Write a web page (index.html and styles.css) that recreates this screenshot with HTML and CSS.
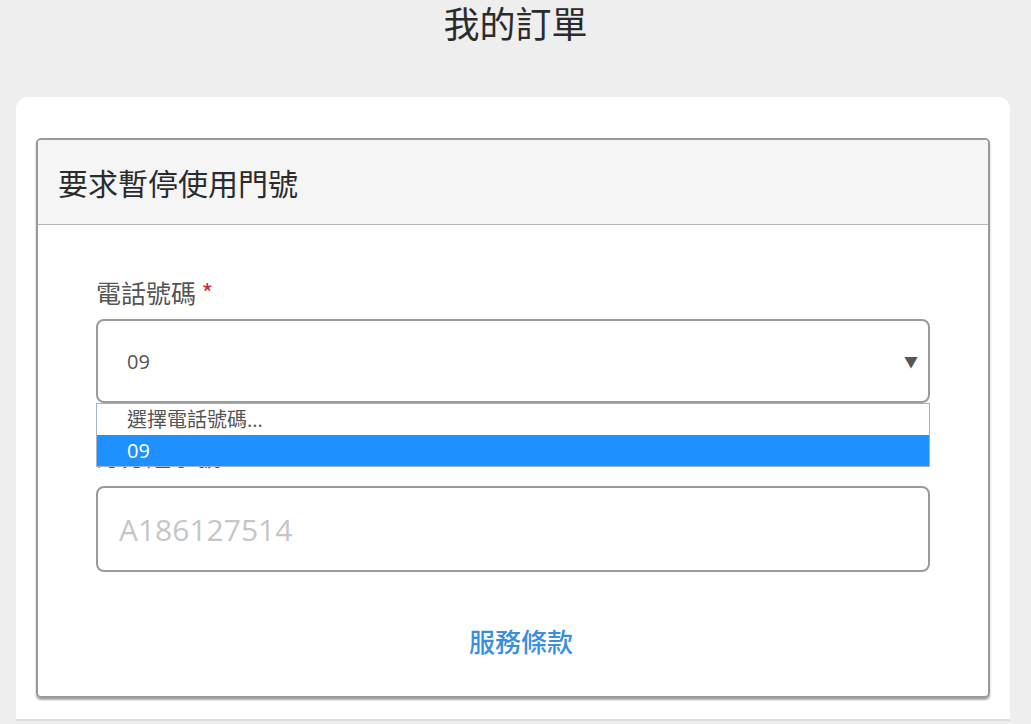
FILE: index.html
```html
<!DOCTYPE html>
<html lang="zh-Hant">
<head>
    <meta charset="UTF-8">
    <title>我的訂單</title>
    <link rel="stylesheet" href="styles.css">
</head>
<body>
<h1 class="pageTitle">我的訂單</h1>
<div class="card">
    <div class="panel">
        <div class="panelHead">要求暫停使用門號</div>
        <div class="panelBody">
            <div class="field">
                <label class="label">電話號碼 <span class="req">*</span></label>
                <div class="selectWrap">
                    <div class="select">
                        <span>09</span>
                        <span class="arrow">▼</span>
                    </div>
                    <ul class="dropList">
                        <li>選擇電話號碼...</li>
                        <li class="on">09</li>
                    </ul>
                </div>
            </div>
            <div class="field field2">
                <label class="label">身分證字號 <span class="req">*</span></label>
                <input class="input" type="text" placeholder="A186127514">
            </div>
            <a class="terms" href="#">服務條款</a>
        </div>
    </div>
</div>
</body>
</html>
```
FILE: styles.css
```css
*{
    margin: 0;
    padding: 0;
    list-style: none;
    box-sizing: border-box;
}
html,body{
    width: 100%;
    height: 100%;
}
body{
    background: #eee;
    font-family: "Open Sans", "Noto Sans CJK TC", sans-serif;
    color: #555;
    overflow: hidden;
}
.pageTitle{
    height: 97px;
    padding-top: 2px;
    line-height: 40px;
    text-align: center;
    font-size: 36px;
    font-weight: normal;
    color: #2b2b2b;
    font-family: "Noto Sans CJK TC", sans-serif;
}
.card{
    margin-left: 16px;
    width: 994px;
    height: 624px;
    padding: 41px 20px 0;
    background: #fff;
    border-radius: 12px 12px 0 0;
    border-bottom: 2px solid #ddd;
}
.panel{
    border: 2px solid #999;
    border-radius: 5px;
    box-shadow: 0 2px 2px rgba(0,0,0,.35);
}
.panelHead{
    height: 85px;
    padding-left: 20px;
    line-height: 84px;
    background: #f5f5f5;
    border-bottom: 1px solid #b5b5b5;
    border-radius: 3px 3px 0 0;
    font-family: "Noto Sans CJK TC", sans-serif;
    font-size: 30px;
    font-weight: normal;
    color: #2b2b2b;
}
.panelBody{
    padding: 52px 58px 39px;
    display: flex;
    flex-direction: column;
}
.field{
    display: flex;
    flex-direction: column;
    gap: 12px;
}
.field2{
    margin-top: 37px;
    gap: 16px;
}
.label{
    font-family: "Noto Sans CJK TC", sans-serif;
    font-size: 25px;
    line-height: 30px;
    color: #555;
}
.req{
    color: #c9302c;
}
.selectWrap{
    position: relative;
}
.select{
    height: 84px;
    border: 2px solid #9a9a9a;
    border-radius: 8px;
    padding: 0 10px 0 29px;
    display: flex;
    align-items: center;
    justify-content: space-between;
    font-size: 20px;
    color: #555;
}
.select .arrow{
    font-size: 14px;
    color: #555;
}
.dropList{
    position: absolute;
    left: 0;
    right: 0;
    top: 84px;
    background: #fff;
    border: 1px solid #a3b3c3;
    z-index: 2;
}
.dropList li{
    height: 31px;
    line-height: 31px;
    padding-left: 30px;
    font-family: "Open Sans", "Noto Sans CJK TC", sans-serif;
    font-size: 20px;
    color: #555;
}
.dropList li.on{
    background: #1e90ff;
    color: #fff;
}
.input{
    height: 86px;
    border: 2px solid #9a9a9a;
    border-radius: 8px;
    padding-left: 21px;
    font-family: "Open Sans", sans-serif;
    font-size: 30px;
    outline: none;
}
.input::placeholder{
    color: #c6c6c6;
}
.terms{
    margin-top: 53px;
    padding-left: 16px;
    align-self: center;
    line-height: 32px;
    font-family: "Noto Sans CJK TC", sans-serif;
    font-size: 26px;
    font-weight: 500;
    color: #3a8ee0;
    text-decoration: none;
}
```
